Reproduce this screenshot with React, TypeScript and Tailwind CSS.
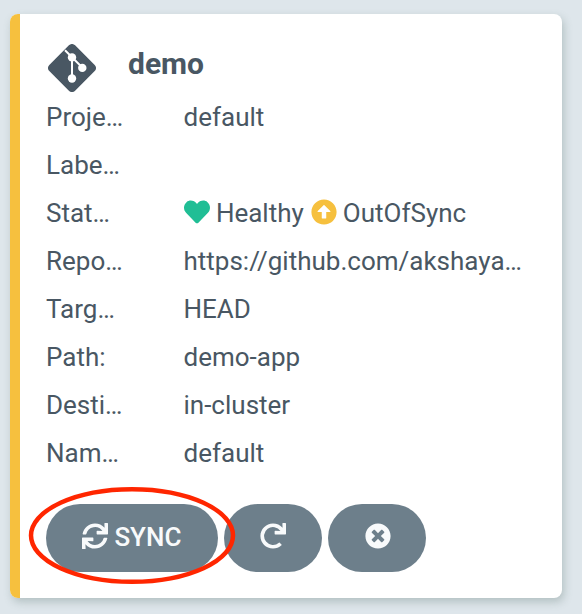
import { FaHeart, FaSync, FaRedo, FaTimesCircle, FaArrowAltCircleUp } from "react-icons/fa";

const GitLogo = () => (
  <svg viewBox="0 0 48 48" className="block size-12">
    <path
      fill="#495763"
      d="M20.9 1.3a4.3 4.3 0 0 1 6.2 0l19.6 19.6a4.3 4.3 0 0 1 0 6.2L27.1 46.7a4.3 4.3 0 0 1-6.2 0L1.3 27.1a4.3 4.3 0 0 1 0-6.2Z"
    />
    <g stroke="#fff" strokeWidth="2" fill="none">
      <path d="M17 6.2 24 13.3 34.5 23.8M24 13.3V34.5" />
    </g>
    <g fill="#fff">
      <circle cx="24" cy="13.4" r="4.2" />
      <circle cx="34.3" cy="23.9" r="4.2" />
      <circle cx="24" cy="34.5" r="4.2" />
    </g>
  </svg>
);

const rows = [
  ["Project:", "default"],
  ["Labels:", ""],
  ["Status:", "status"],
  ["Repository:", "https://github.com/akshayaws/demo"],
  ["Target:", "HEAD"],
  ["Path:", "demo-app"],
  ["Destination:", "in-cluster"],
  ["Namespace:", "default"],
];

const Status = () => (
  <span className="flex items-center">
    <FaHeart className="mb-0.5 size-[26px] text-[#20be95]" />
    <span className="ml-[6.4px]">Healthy</span>
    <FaArrowAltCircleUp className="mb-0.5 ml-[7.2px] size-[26px] text-[#f6c03e]" />
    <span className="ml-[5.8px]">OutOfSync</span>
  </span>
);

export default function App() {
  return (
    <main className="h-[614px] w-[582px] overflow-hidden bg-[#dee6eb] pt-3.5 pl-2.5 font-[Roboto,sans-serif] text-[26px] text-[#495763]">
      <section className="flex h-[584px] w-[552px] overflow-hidden rounded-lg bg-white shadow-[2px_4px_8px_rgba(90,115,110,0.32)]">
        <div className="w-2.5 shrink-0 bg-[#f6c03e]" />
        <div className="min-w-0 flex-1 pr-[38px] pl-[26px]">
          <header className="flex h-[79px] pt-[30px] pl-0.5">
            <GitLogo />
            <h1 className="mt-px ml-8 text-[30px] leading-[38px] font-bold">demo</h1>
          </header>
          {rows.map(([label, value]) => (
            <div key={label} className="flex h-12 items-center leading-12">
              <div className="w-[78px] shrink-0 truncate">{label}</div>
              <div className="ml-[59.5px] min-w-0 flex-1 truncate">
                {value === "status" ? <Status /> : value}
              </div>
            </div>
          ))}
          <div className="mt-[27px] flex gap-1.5 text-[#f8fafb]">
            <div className="relative">
              <button className="flex h-[68px] w-[172px] items-center justify-center gap-[6.4px] rounded-full bg-[#6d7f8b] pr-[0.6px] pb-0.5 font-medium">
                <FaSync className="mb-0.5 size-[26px]" />
                <span>SYNC</span>
              </button>
              <svg
                viewBox="0 0 208 100"
                className="pointer-events-none absolute -top-[19px] -left-[18px] z-10 h-[100px] w-[208px] max-w-none"
              >
                <ellipse cx="104" cy="50.5" rx="101" ry="46.3" fill="none" stroke="#ff2600" strokeWidth="4.5" />
              </svg>
            </div>
            <button className="flex h-[68px] w-[98px] items-center justify-center rounded-full bg-[#6d7f8b] pb-1">
              <FaRedo className="size-[26px]" />
            </button>
            <button className="flex h-[68px] w-[98px] items-center justify-center rounded-full bg-[#6d7f8b] pb-1 pl-px">
              <FaTimesCircle className="size-[26px]" />
            </button>
          </div>
        </div>
      </section>
    </main>
  );
}
